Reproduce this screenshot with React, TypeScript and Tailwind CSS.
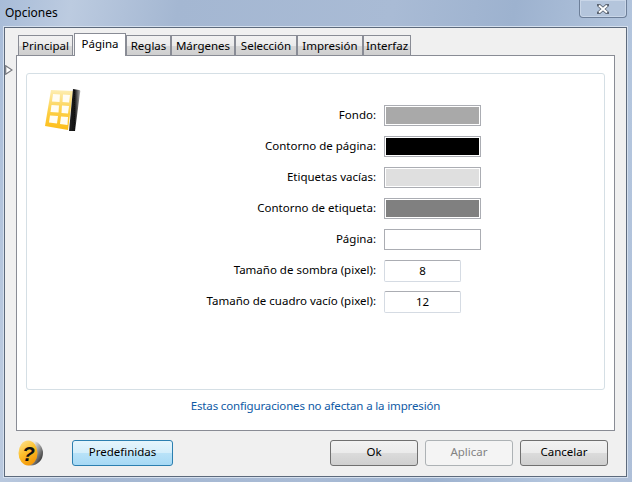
import React from "react";

const tabs = [
  { name: "Principal", width: "w-[55px]" },
  { name: "Página", width: "w-[52px]" },
  { name: "Reglas", width: "w-[45px]" },
  { name: "Márgenes", width: "w-[64px]" },
  { name: "Selección", width: "w-[62px]" },
  { name: "Impresión", width: "w-[66px]" },
  { name: "Interfaz", width: "w-[48px]" },
];

const colorRows = [
  { label: "Fondo:", swatch: "bg-[#a9a9a9]" },
  { label: "Contorno de página:", swatch: "bg-black" },
  { label: "Etiquetas vacías:", swatch: "bg-[#dfdfdf]" },
  { label: "Contorno de etiqueta:", swatch: "bg-[#808080]" },
  { label: "Página:", swatch: "bg-white" },
];

const sizeRows = [
  { label: "Tamaño de sombra (pixel):", value: "8" },
  { label: "Tamaño de cuadro vacío (pixel):", value: "12" },
];

const PageIcon = () => (
  <svg width="38" height="46" viewBox="0 0 38 46" className="block">
    <defs>
      <linearGradient id="pageFill" x1="0" y1="0" x2="0" y2="1">
        <stop offset="0" stopColor="#fdeeb4" />
        <stop offset="0.5" stopColor="#fdd14a" />
        <stop offset="1" stopColor="#fdbd18" />
      </linearGradient>
      <linearGradient id="pageSide" x1="0" y1="0" x2="1" y2="0">
        <stop offset="0" stopColor="#222" />
        <stop offset="0.5" stopColor="#111" />
        <stop offset="1" stopColor="#b5b5b5" />
      </linearGradient>
      <filter id="pageSoft">
        <feGaussianBlur stdDeviation="0.35" />
      </filter>
    </defs>
    <g filter="url(#pageSoft)">
      <path d="M7 2 L29 3 L24 42 L1 38 Z" fill="url(#pageFill)" />
      <path d="M29 1 L35 2 Q37 2 36 5 L31 43 L25 43 Z" fill="url(#pageSide)" />
      <g fill="#fffdf3">
        <path d="M9 6 L16 6.5 L15.5 14 L8 13.5 Z" />
        <path d="M19 6.5 L26 7 L25 14.5 L18.5 14 Z" />
        <path d="M7.5 17 L15 17.5 L14.5 24.5 L6.5 24 Z" />
        <path d="M18 17.5 L25 18 L24 25.5 L17.5 25 Z" />
        <path d="M6 27.5 L14 28 L13 35.5 L5 34.5 Z" />
        <path d="M17 28.5 L24 29 L23.5 37 L16 36 Z" />
      </g>
    </g>
  </svg>
);

const HelpIcon = () => (
  <svg width="26" height="28" viewBox="0 0 26 28" className="block">
    <defs>
      <linearGradient id="helpRim" x1="0" y1="0" x2="1" y2="0.6">
        <stop offset="0.5" stopColor="#e8e8e8" />
        <stop offset="0.75" stopColor="#9a9a9a" />
        <stop offset="1" stopColor="#444" />
      </linearGradient>
      <linearGradient id="helpFill" x1="0.2" y1="0" x2="0.7" y2="1">
        <stop offset="0" stopColor="#fde08a" />
        <stop offset="0.45" stopColor="#fcc02c" />
        <stop offset="1" stopColor="#f39404" />
      </linearGradient>
    </defs>
    <ellipse cx="13" cy="14" rx="12" ry="12.5" fill="url(#helpRim)" />
    <ellipse cx="10" cy="14" rx="9.5" ry="12.5" fill="url(#helpFill)" />
    <text x="10.5" y="22" textAnchor="middle" fontSize="21" fontWeight="700" fontStyle="italic" fontFamily="'Liberation Sans', sans-serif" fill="#111">?</text>
  </svg>
);

const DialogButton: React.FC<{ children: React.ReactNode; className?: string; disabled?: boolean; focused?: boolean }> = ({ children, className = "", disabled, focused }) => {
  let look = "border-[#707070] bg-[linear-gradient(#f2f2f2_0%,#ebebeb_48%,#dbdbdb_52%,#cfcfcf_100%)] text-black";
  if (focused) look = "border-[#2c7fb0] bg-[linear-gradient(#e6f5fc_0%,#d4eefb_48%,#b8e2f8_52%,#a7d9f5_100%)] text-black";
  if (disabled) look = "border-[#adb2b5] bg-[#f4f4f4] text-[#838383]";
  return (
    <div className={`flex h-[26px] items-center justify-center rounded-[3px] border pb-px ${look} ${className}`}>
      {children}
    </div>
  );
};

export default function App() {
  return (
    <div
      className="relative flex h-[482px] w-[632px] flex-col overflow-hidden bg-[linear-gradient(100deg,#a8bcd8_0%,#bccbe0_10%,#a4b7d2_25%,#a9bbd5_55%,#9db2cf_72%,#b4c6de_90%,#aebfd8_100%)] text-[11.5px] text-black"
      style={{ fontFamily: "'Noto Sans', 'Open Sans', sans-serif" }}
    >
      <div className="flex h-[27px] shrink-0 items-start justify-between pl-[5px] pr-[5px]">
        <span className="pt-[4px] text-[12px] leading-[17px]">Opciones</span>
        <div className="flex h-[18px] w-[48px] items-center justify-center rounded-b-[4px] border border-t-0 border-[#6d7f99] bg-[#b4c5dc] shadow-[inset_0_0_0_1px_#c9d6e8]">
          <svg width="12" height="10" viewBox="0 0 12 10">
            <path d="M1.5 1 L10.5 9 M10.5 1 L1.5 9" stroke="#5b6472" strokeWidth="3.6" strokeLinecap="square" />
            <path d="M2 1.5 L10 8.5 M10 1.5 L2 8.5" stroke="#fff" strokeWidth="2" />
          </svg>
        </div>
      </div>

      <div className="mb-[5px] ml-[4px] mr-[5px] flex flex-1 flex-col border border-[#5d6a7c] bg-[#f0f0f0] px-[11px] shadow-[0_0_0_1px_#d5e0ee]">
        <div className="flex h-[27px] shrink-0 items-end pl-[2px]">
          {tabs.map((tab) => {
            const active = tab.name === "Página";
            return (
              <div
                key={tab.name}
                className={
                  active
                    ? `z-10 -mb-px ml-px flex h-[23px] items-center justify-center border border-b-0 border-[#898c95] bg-white pb-[3px] ${tab.width}`
                    : `flex h-[20px] items-center justify-center border border-b-0 border-[#898c95] bg-[linear-gradient(#f2f2f2_0%,#ebebeb_50%,#d8d8d8_52%,#cfcfcf_100%)] ${tab.width}`
                }
              >
                {tab.name}
              </div>
            );
          })}
        </div>

        <div className="flex h-[376px] shrink-0 flex-col border border-[#898c95] bg-white px-[9px] pt-[17px]">
          <div className="flex h-[317px] shrink-0 rounded-[3px] border border-[#d5dfe5] pl-[17px] pt-[14px]">
            <div className="w-[332px] shrink-0">
              <PageIcon />
            </div>
            <div className="flex flex-1 flex-col pt-[17px]">
              {colorRows.map((row) => (
                <div key={row.label} className="flex h-[31px] items-start">
                  <span className="w-[0px] whitespace-nowrap leading-[20px] [direction:rtl]">
                    <bdi>{row.label}</bdi>
                  </span>
                  <div className={`ml-[8px] h-[21px] w-[97px] border border-[#abadb3] ${row.swatch} shadow-[inset_0_0_0_1px_#fff]`} />
                </div>
              ))}
              {sizeRows.map((row) => (
                <div key={row.label} className="flex h-[31px] items-start">
                  <span className="w-[0px] whitespace-nowrap leading-[20px] [direction:rtl]">
                    <bdi>{row.label}</bdi>
                  </span>
                  <div className="ml-[8px] flex h-[22px] w-[77px] items-center justify-center rounded-[2px] border border-[#d5dbe3] border-t-[#abadb3] bg-white pb-px">
                    {row.value}
                  </div>
                </div>
              ))}
            </div>
          </div>
          <div className="pt-[8px] text-center leading-[16px] tracking-[-0.15px] text-[#0f5aa5]">
            Estas configuraciones no afectan a la impresión
          </div>
        </div>

        <div className="flex flex-1 items-center pb-[2px] pr-[6px]">
          <div className="ml-[2px] w-[54px]">
            <HelpIcon />
          </div>
          <DialogButton focused className="w-[101px]">Predefinidas</DialogButton>
          <DialogButton className="ml-[157px] w-[88px]">Ok</DialogButton>
          <DialogButton disabled className="ml-[7px] w-[88px]">Aplicar</DialogButton>
          <DialogButton className="ml-[7px] w-[88px]">Cancelar</DialogButton>
        </div>
      </div>

      <svg width="8" height="10" viewBox="0 0 8 10" className="absolute left-[5px] top-[65px]">
        <path d="M0.7 0.8 L7 5 L0.7 9.2 Z" fill="#fff" stroke="#77797f" strokeWidth="1.2" />
      </svg>
    </div>
  );
}
